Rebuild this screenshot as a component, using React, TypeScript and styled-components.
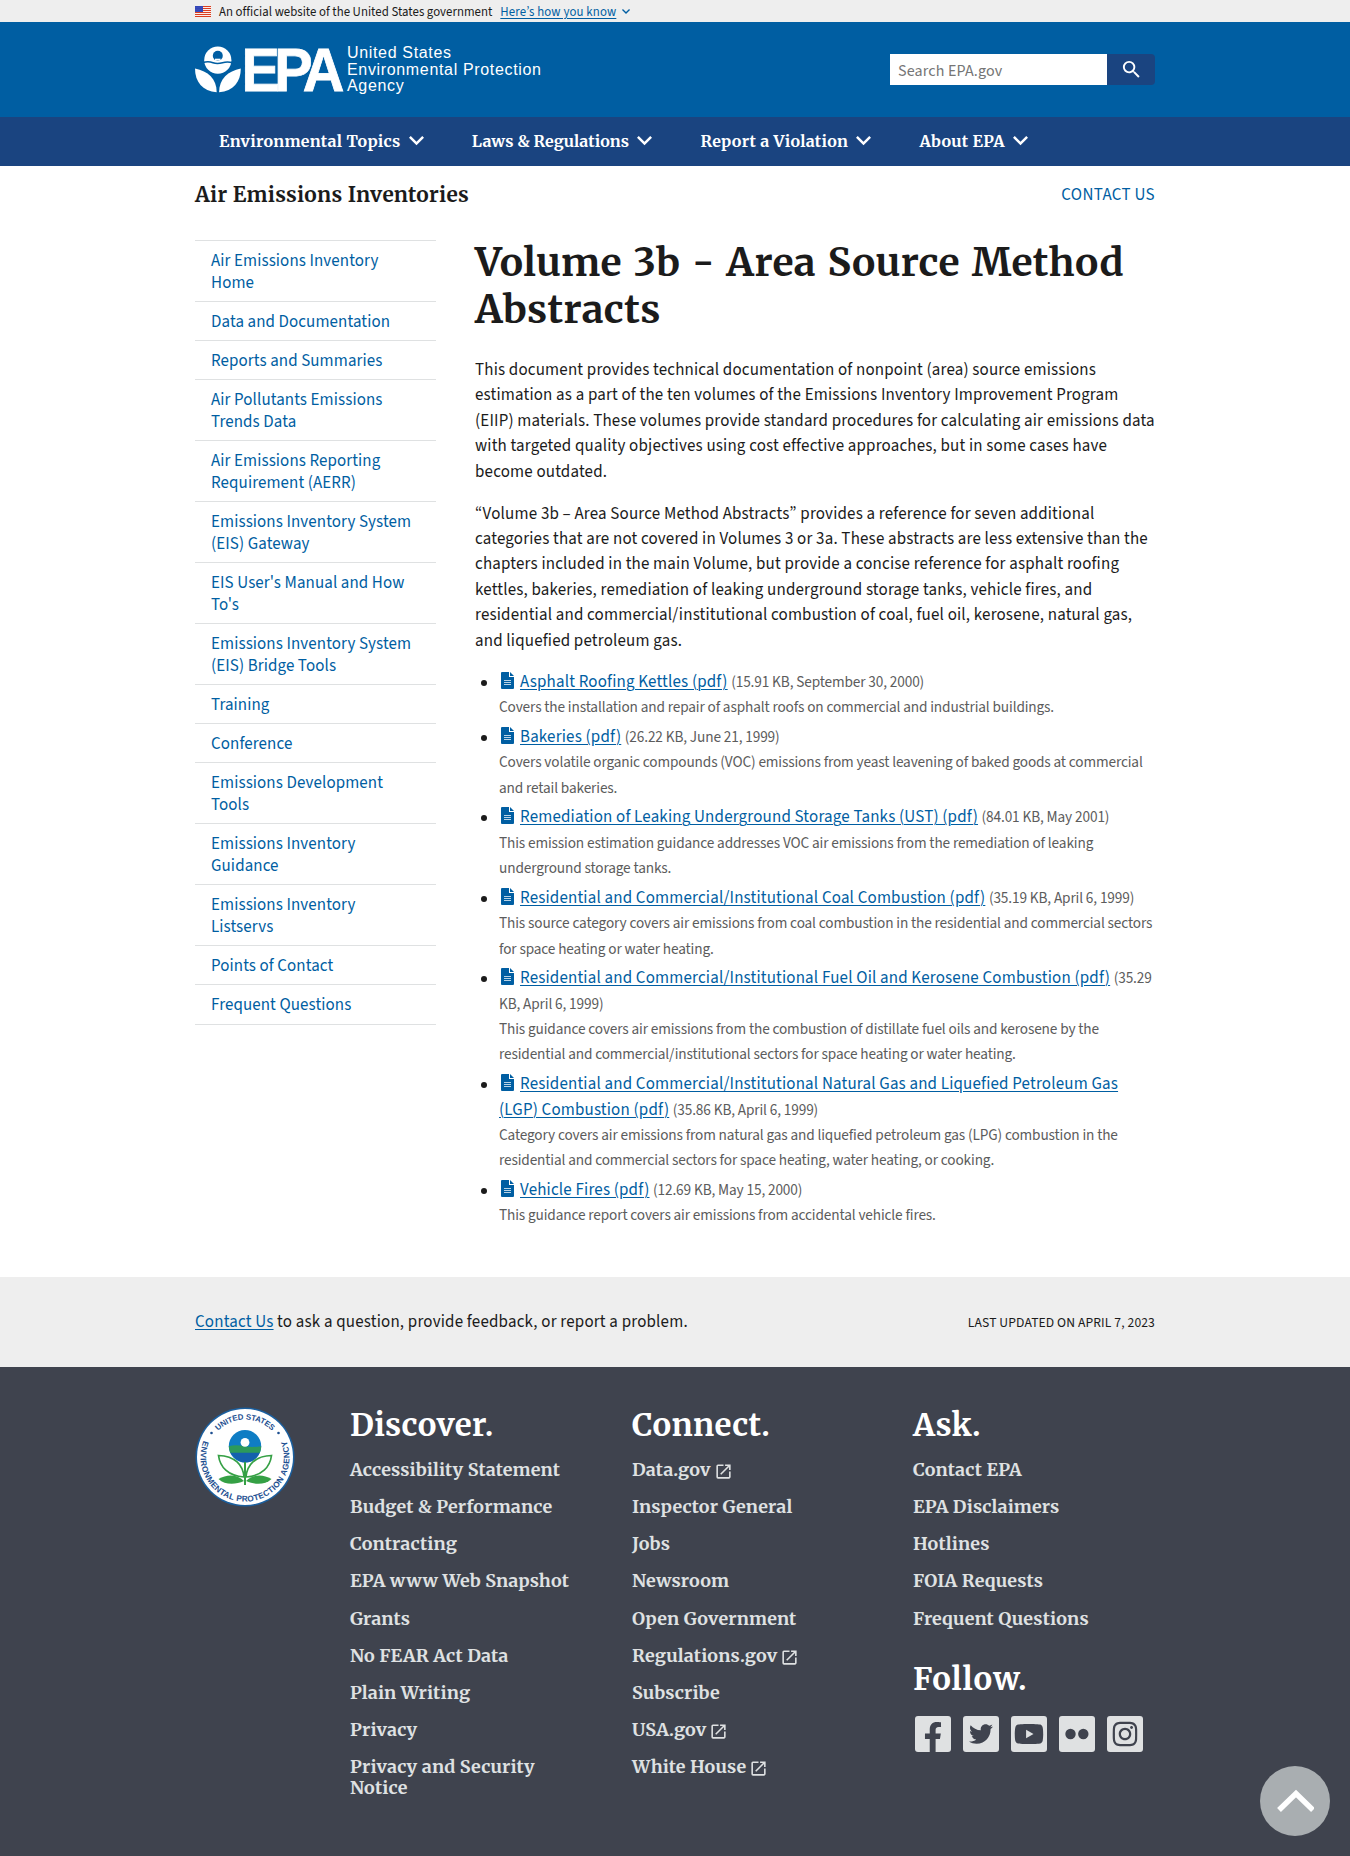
import React from "react";
import styled, { createGlobalStyle, css } from "styled-components";
import { FaFacebookF, FaInstagram, FaTwitter, FaYoutube } from "react-icons/fa";

const sans =
  '"Source Sans 3", "Source Sans Pro", "Noto Sans CJK KR", "Noto Sans", sans-serif';
const serif = 'Merriweather, "Noto Serif", "DejaVu Serif Condensed", "DejaVu Serif", serif';

const color = {
  ink: "#1b1b1b",
  muted: "#5c5c5c",
  link: "#005ea2",
  primary: "#005ea2",
  navy: "#1a4480",
  pale: "#eeeeee",
  line: "#dfe1e2",
  footer: "#3f434e",
};

const GlobalStyle = createGlobalStyle`
  * { box-sizing: border-box; }
  body {
    margin: 0;
    background: #fff;
    color: ${color.ink};
    font-family: ${sans};
    font-size: 16.96px;
    line-height: 25.44px;
  }
  h1, h2, h3, p, ul { margin: 0; padding: 0; }
`;

const Container = styled.div`
  width: 960px;
  margin: 0 auto;
`;

const linkStyle = css`
  color: ${color.link};
  text-decoration: underline;
  text-decoration-thickness: 1px;
  text-underline-offset: 2px;
`;

const TextLink = styled.a`
  ${linkStyle}
`;

/* Government banner */

const Banner = styled.div`
  height: 22px;
  background: ${color.pale};
  font-size: 12.8px;
  line-height: 22px;
`;

const BannerRow = styled(Container)`
  display: flex;
  align-items: center;
  height: 22px;
  padding-top: 1px;
  letter-spacing: 0.03px;

  > svg:first-child { margin-right: 8px; }
  > a { margin: 0 6px 0 8px; letter-spacing: 0.14px; }
`;

/* Header */

const Header = styled.header`
  height: 95px;
  background: ${color.primary};
`;

const HeaderRow = styled(Container)`
  display: flex;
  justify-content: space-between;
  align-items: flex-start;
`;

const Brand = styled.a`
  display: flex;
  margin-top: 24px;
  color: #fff;
`;

const BrandName = styled.span`
  margin: -1px 0 0 3px;
  font-family: "Liberation Sans", Arial, sans-serif;
  font-size: 16px;
  line-height: 16.6px;
  letter-spacing: 0.66px;
`;

const Search = styled.form`
  display: flex;
  height: 31px;
  margin-top: 32px;
`;

const SearchInput = styled.input`
  width: 217px;
  height: 31px;
  padding: 2px 8px 0;
  border: 0;
  background: #fff;
  font-family: ${sans};
  font-size: 16px;
  letter-spacing: 0.15px;
  &::placeholder { color: #757575; opacity: 1; }
`;

const SearchButton = styled.button`
  display: flex;
  align-items: center;
  justify-content: center;
  width: 48px;
  padding: 0;
  border: 0;
  border-radius: 0 4px 4px 0;
  background: ${color.navy};
`;

const Nav = styled.nav`
  height: 49px;
  background: ${color.navy};
`;

const NavRow = styled(Container)`
  display: flex;
  align-items: center;
  gap: 48.3px;
  height: 48px;
  padding-left: 24px;
`;

const NavItem = styled.a<{ $tracking: number }>`
  display: flex;
  align-items: center;
  gap: 8px;
  color: #fff;
  font-family: ${serif};
  font-size: 16px;
  font-weight: 700;
  line-height: 20px;
  letter-spacing: ${(p) => p.$tracking}px;
`;

/* Page body */

const SiteBar = styled(Container)`
  display: flex;
  justify-content: space-between;
  align-items: center;
  height: 57px;
  padding-top: 2px;
`;

const SiteName = styled.h2`
  font-family: ${serif};
  font-size: 20.8px;
  letter-spacing: 0.32px;
`;

const ContactLink = styled.a`
  color: ${color.link};
  letter-spacing: 0.32px;
`;

const Columns = styled(Container)`
  display: flex;
  align-items: flex-start;
  gap: 39px;
  height: 1054px;
  padding-top: 17px;
`;

const SideNav = styled.ul`
  flex: none;
  width: 241px;
  list-style: none;
  line-height: 22px;
  letter-spacing: 0.1px;
  border-bottom: 1px solid ${color.line};
`;

const SideItem = styled.li`
  padding: 9px 16px 7px;
  border-top: 1px solid ${color.line};
  color: ${color.link};

  &:last-child { padding-bottom: 8px; }
`;

const Main = styled.main`
  flex: none;
  width: 680px;
  letter-spacing: 0.18px;
`;

const PageTitle = styled.h1`
  margin: -1px 0 25px;
  font-family: ${serif};
  font-size: 39px;
  line-height: 47px;
  letter-spacing: 0.36px;
  word-spacing: 2px;
`;

const Paragraph = styled.p`
  margin-bottom: 16.4px;
  white-space: nowrap;
`;

const DocList = styled.ul`
  margin-top: -1px;
  list-style: none;
`;

const DocItem = styled.li`
  display: flex;
  margin-bottom: 4.2px;
  white-space: nowrap;

  &::before {
    content: "";
    width: 6px;
    height: 6px;
    margin: 10px 12px 0 6px;
    border-radius: 50%;
    background: ${color.ink};
  }
`;

const Small = styled.span`
  color: ${color.muted};
  font-size: 15.26px;
  letter-spacing: -0.13px;
`;

const Description = styled(Small)`
  display: block;
`;

const DocIconSvg = styled.svg`
  width: 13px;
  height: 17px;
  margin: -2px 6px 0 2px;
  vertical-align: -2px;
`;

/* Page footer */

const FeedbackBar = styled.div`
  height: 90px;
  background: ${color.pale};
`;

const FeedbackRow = styled(Container)`
  display: flex;
  justify-content: space-between;
  align-items: center;
  height: 90px;
  padding-top: 1px;
  letter-spacing: 0.19px;
`;

const Updated = styled.span`
  font-size: 13.6px;
  letter-spacing: 0.11px;
`;

const Footer = styled.footer`
  height: 489px;
  background: ${color.footer};
`;

const FooterRow = styled(Container)`
  display: grid;
  grid-template-columns: 155px 282px 281px 242px;
  padding-top: 38px;
`;

const FooterTitle = styled.h3<{ $after?: boolean }>`
  margin-top: ${(p) => (p.$after ? 30 : 0)}px;
  color: #fff;
  font-family: ${serif};
  font-size: 31.2px;
  line-height: 40px;
  letter-spacing: ${(p) => (p.$after ? 0.9 : 0.35)}px;
`;

const FooterLinks = styled.ul`
  display: flex;
  flex-direction: column;
  gap: 15.9px;
  width: 230px;
  margin-top: 14px;
  list-style: none;
`;

const FooterLink = styled.li`
  color: ${color.line};
  font-family: ${serif};
  font-size: 17.9px;
  font-weight: 700;
  line-height: 21.25px;
  letter-spacing: 0.16px;

  svg { margin: -4px 0 -4px 3px; vertical-align: -1px; }
`;

const Social = styled.div`
  display: flex;
  gap: 12px;
  margin: 17px 0 0 2px;
`;

const SocialTile = styled.a`
  display: flex;
  align-items: center;
  justify-content: center;
  width: 36px;
  height: 36px;
  border-radius: 3px;
  background: ${color.line};
  color: ${color.footer};
  overflow: hidden;
`;

const FacebookTile = styled(SocialTile)`
  align-items: flex-end;
`;

const BackToTop = styled.a`
  position: fixed;
  right: 20px;
  bottom: 20px;
  display: flex;
  align-items: center;
  justify-content: center;
  width: 70px;
  height: 70px;
  border-radius: 50%;
  background: #a9aeb1;
`;

/* Drawings */

const MarkSvg = styled.svg`
  overflow: visible;
`;

const Flag = () => (
  <svg width="16" height="11" viewBox="0 0 16 11">
    <rect width="16" height="11" fill="#fff" />
    {[0, 2, 4, 6, 8, 10].map((y) => (
      <rect key={y} y={y} width="16" height="1.1" fill="#db3e1f" />
    ))}
    <rect width="8" height="6" fill="#1e33b1" />
    {[1, 3, 5].map((y) =>
      [1, 3, 5, 7].map((x) => (
        <circle key={`${x}-${y}`} cx={x} cy={y} r="0.4" fill="#fff" />
      )),
    )}
  </svg>
);

const Chevron = ({ width, fill }: { width: number; fill: string }) => (
  <svg width={width} height={width * 0.62} viewBox="6 8.59 12 7.41">
    <path fill={fill} d="M16.59 8.59 12 13.17 7.41 8.59 6 10l6 6 6-6z" />
  </svg>
);

const SearchIcon = () => (
  <svg width="23" height="23" viewBox="0 0 24 24">
    <path
      fill="#fff"
      d="M15.5 14h-.79l-.28-.27A6.47 6.47 0 0 0 16 9.5 6.5 6.5 0 1 0 9.5 16c1.61 0 3.09-.59 4.23-1.57l.27.28v.79l5 4.99L20.49 19l-4.99-5zm-6 0C7.01 14 5 11.99 5 9.5S7.01 5 9.5 5 14 7.01 14 9.5 11.99 14 9.5 14z"
    />
  </svg>
);

const EpaMark = () => (
  <MarkSvg width="149" height="47" viewBox="0 0 149 47">
    <circle cx="22.8" cy="14.2" r="13.6" fill="#fff" />
    <circle cx="22.8" cy="9.8" r="5" fill={color.primary} />
    <path
      d="M8 16.6c4-1.400 7-1 10 .1s6 1 9.500 0 6-1 10-.1"
      fill="none"
      stroke={color.primary}
      strokeWidth="1.600"
    />
    <path d="M20 13.600h5.600" stroke="#fff" strokeWidth="1.800" />
    <path d="M0 22.500C13 25 21.700 33 21.700 46.300 7.500 45 0 36 0 22.500Z" fill="#fff" />
    <path d="M45.800 22.500C33 25 24.100 33 24.100 46.300 38.300 45 45.800 36 45.800 22.500Z" fill="#fff" />
    <text
      transform="translate(46.600 44.700) scale(0.93 1)"
      fill="#fff"
      stroke="#fff"
      strokeWidth="0.8"
      fontFamily='"Liberation Sans", Arial, sans-serif'
      fontWeight="700"
      fontSize="62"
      letterSpacing="-6.2"
    >
      EPA
    </text>
  </MarkSvg>
);

const DocIcon = () => (
  <DocIconSvg viewBox="0 0 13 17">
    <path fill={color.link} d="M1 0h7v5h5v11a1 1 0 0 1-1 1H1a1 1 0 0 1-1-1V1a1 1 0 0 1 1-1Z" />
    <path fill={color.link} d="M9 0l4 4H9Z" />
    <path stroke="#b9d3e6" strokeWidth="1" d="M3 8.500h7M3 10.500h7M3 12.500h7" />
  </DocIconSvg>
);

const ExternalIcon = () => (
  <svg width="19" height="19" viewBox="0 0 24 24">
    <path
      fill={color.line}
      d="M19 19H5V5h7V3H5a2 2 0 0 0-2 2v14a2 2 0 0 0 2 2h14c1.100 0 2-.9 2-2v-7h-2v7zM14 3v2h3.590l-9.830 9.830 1.410 1.410L19 6.410V10h2V3h-7z"
    />
  </svg>
);

const Seal = () => (
  <svg width="100" height="104" viewBox="-50 -52 100 104">
    <defs>
      <path id="seal-top" d="M-37.500 0A37.500 37.500 0 0 1 37.500 0" />
      <path id="seal-bottom" d="M-40.600-18.100A44.500 44.500 0 1 0 40.600-18.100" />
    </defs>
    <circle r="49.500" fill="#1b5f9e" />
    <circle r="48" fill="#fff" />
    <g fill="#1d4f91" fontFamily='"Liberation Sans", Arial, sans-serif' fontWeight="700">
      <text textAnchor="middle" fontSize="7.900">
        <textPath href="#seal-top" startOffset="50%" textLength="60">UNITED STATES</textPath>
      </text>
      <text fontSize="8.200">
        <textPath href="#seal-bottom" startOffset="2" textLength="173">ENVIRONMENTAL PROTECTION AGENCY</textPath>
      </text>
      <circle cx="-33.500" cy="-24" r="1.300" />
      <circle cx="33.500" cy="-24" r="1.300" />
    </g>
    <circle cy="-10.700" r="16.200" fill="#0f7dc4" />
    <path d="M-16.200-10.700c5-1.500 10-1 16 0s11 .8 16.400 0c0 2-.5 4.300-1.500 6.700H-14.700c-1-2.200-1.500-4.500-1.500-6.700Z" fill="#2c9a5b" />
    <path d="M-14.700-4.200h29.400C12 2 6.500 5.500 0 5.500S-12-.5-14.700-4.200Z" fill="#1461ad" />
    <circle cy="-14.600" r="4.400" fill="#fff" />
    <g fill="#fff" stroke="#35a045" strokeWidth="1.700">
      <path d="M-1 20C-2 8-10-1-26.500-1.500-25 10-17 19-1 20Z" />
      <path d="M1 20C2 8 10-1 26.500-1.500 25 10 17 19 1 20Z" />
    </g>
    <g fill="#35a045">
      <path d="M-1 24C-8 17-18 17-26.500 22-20 28-10 28-1 24Z" />
      <path d="M1 24C8 17 18 17 26.500 22 20 28 10 28 1 24Z" />
      <rect x="-1" y="5" width="2" height="23" />
    </g>
  </svg>
);

/* Content */

const navItems = [
  { label: "Environmental Topics", tracking: 0.3 },
  { label: "Laws & Regulations", tracking: 0.06 },
  { label: "Report a Violation", tracking: 0.3 },
  { label: "About EPA", tracking: 0.3 },
];

const sideItems = [
  "Air Emissions Inventory Home",
  "Data and Documentation",
  "Reports and Summaries",
  "Air Pollutants Emissions Trends Data",
  "Air Emissions Reporting Requirement (AERR)",
  "Emissions Inventory System (EIS) Gateway",
  "EIS User's Manual and How To's",
  "Emissions Inventory System (EIS) Bridge Tools",
  "Training",
  "Conference",
  "Emissions Development Tools",
  "Emissions Inventory Guidance",
  "Emissions Inventory Listservs",
  "Points of Contact",
  "Frequent Questions",
];

const paragraphs = [
  [
    "This document provides technical documentation of nonpoint (area) source emissions",
    "estimation as a part of the ten volumes of the Emissions Inventory Improvement Program",
    "(EIIP) materials. These volumes provide standard procedures for calculating air emissions data",
    "with targeted quality objectives using cost effective approaches, but in some cases have",
    "become outdated.",
  ],
  [
    "“Volume 3b – Area Source Method Abstracts” provides a reference for seven additional",
    "categories that are not covered in Volumes 3 or 3a. These abstracts are less extensive than the",
    "chapters included in the main Volume, but provide a concise reference for asphalt roofing",
    "kettles, bakeries, remediation of leaking underground storage tanks, vehicle fires, and",
    "residential and commercial/institutional combustion of coal, fuel oil, kerosene, natural gas,",
    "and liquefied petroleum gas.",
  ],
];

const documents = [
  {
    title: ["Asphalt Roofing Kettles (pdf)"],
    meta: ["(15.91 KB, September 30, 2000)"],
    text: ["Covers the installation and repair of asphalt roofs on commercial and industrial buildings."],
  },
  {
    title: ["Bakeries (pdf)"],
    meta: ["(26.22 KB, June 21, 1999)"],
    text: [
      "Covers volatile organic compounds (VOC) emissions from yeast leavening of baked goods at commercial",
      "and retail bakeries.",
    ],
  },
  {
    title: ["Remediation of Leaking Underground Storage Tanks (UST) (pdf)"],
    meta: ["(84.01 KB, May 2001)"],
    text: [
      "This emission estimation guidance addresses VOC air emissions from the remediation of leaking",
      "underground storage tanks.",
    ],
  },
  {
    title: ["Residential and Commercial/Institutional Coal Combustion (pdf)"],
    meta: ["(35.19 KB, April 6, 1999)"],
    text: [
      "This source category covers air emissions from coal combustion in the residential and commercial sectors",
      "for space heating or water heating.",
    ],
  },
  {
    title: ["Residential and Commercial/Institutional Fuel Oil and Kerosene Combustion (pdf)"],
    meta: ["(35.29", "KB, April 6, 1999)"],
    text: [
      "This guidance covers air emissions from the combustion of distillate fuel oils and kerosene by the",
      "residential and commercial/institutional sectors for space heating or water heating.",
    ],
  },
  {
    title: [
      "Residential and Commercial/Institutional Natural Gas and Liquefied Petroleum Gas",
      "(LGP) Combustion (pdf)",
    ],
    meta: ["(35.86 KB, April 6, 1999)"],
    text: [
      "Category covers air emissions from natural gas and liquefied petroleum gas (LPG) combustion in the",
      "residential and commercial sectors for space heating, water heating, or cooking.",
    ],
  },
  {
    title: ["Vehicle Fires (pdf)"],
    meta: ["(12.69 KB, May 15, 2000)"],
    text: ["This guidance report covers air emissions from accidental vehicle fires."],
  },
];

const discover = [
  "Accessibility Statement",
  "Budget & Performance",
  "Contracting",
  "EPA www Web Snapshot",
  "Grants",
  "No FEAR Act Data",
  "Plain Writing",
  "Privacy",
  "Privacy and Security Notice",
];

const connect = [
  "Data.gov",
  "Inspector General",
  "Jobs",
  "Newsroom",
  "Open Government",
  "Regulations.gov",
  "Subscribe",
  "USA.gov",
  "White House",
];

const external = ["Data.gov", "Regulations.gov", "USA.gov", "White House"];

const ask = ["Contact EPA", "EPA Disclaimers", "Hotlines", "FOIA Requests", "Frequent Questions"];

const Lines = ({ of }: { of: string[] }) => (
  <>
    {of.map((line, i) => (
      <React.Fragment key={line}>
        {i > 0 && <br />}
        {line}
      </React.Fragment>
    ))}
  </>
);

const LinkList = ({ items }: { items: string[] }) => (
  <FooterLinks>
    {items.map((item) => (
      <FooterLink key={item}>
        {item}
        {external.includes(item) && <ExternalIcon />}
      </FooterLink>
    ))}
  </FooterLinks>
);

export default function App() {
  return (
    <>
      <GlobalStyle />
      <Banner>
        <BannerRow>
          <Flag />
          An official website of the United States government
          <TextLink>Here’s how you know</TextLink>
          <Chevron width={8} fill={color.link} />
        </BannerRow>
      </Banner>
      <Header>
        <HeaderRow>
          <Brand>
            <EpaMark />
            <BrandName>
              <Lines of={["United States", "Environmental Protection", "Agency"]} />
            </BrandName>
          </Brand>
          <Search>
            <SearchInput placeholder="Search EPA.gov" />
            <SearchButton type="button">
              <SearchIcon />
            </SearchButton>
          </Search>
        </HeaderRow>
      </Header>
      <Nav>
        <NavRow>
          {navItems.map((item) => (
            <NavItem key={item.label} $tracking={item.tracking}>
              {item.label}
              <Chevron width={15} fill="#fff" />
            </NavItem>
          ))}
        </NavRow>
      </Nav>
      <SiteBar>
        <SiteName>Air Emissions Inventories</SiteName>
        <ContactLink>CONTACT US</ContactLink>
      </SiteBar>
      <Columns>
        <SideNav>
          {sideItems.map((item) => (
            <SideItem key={item}>{item}</SideItem>
          ))}
        </SideNav>
        <Main>
          <PageTitle>
            <Lines of={["Volume 3b - Area Source Method", "Abstracts"]} />
          </PageTitle>
          {paragraphs.map((lines) => (
            <Paragraph key={lines[0]}>
              <Lines of={lines} />
            </Paragraph>
          ))}
          <DocList>
            {documents.map((doc) => (
              <DocItem key={doc.title[0]}>
                <div>
                  <DocIcon />
                  <TextLink>
                    <Lines of={doc.title} />
                  </TextLink>{" "}
                  <Small>
                    <Lines of={doc.meta} />
                  </Small>
                  <Description>
                    <Lines of={doc.text} />
                  </Description>
                </div>
              </DocItem>
            ))}
          </DocList>
        </Main>
      </Columns>
      <FeedbackBar>
        <FeedbackRow>
          <span>
            <TextLink>Contact Us</TextLink> to ask a question, provide feedback, or report a problem.
          </span>
          <Updated>LAST UPDATED ON APRIL 7, 2023</Updated>
        </FeedbackRow>
      </FeedbackBar>
      <Footer>
        <FooterRow>
          <div>
            <Seal />
          </div>
          <div>
            <FooterTitle>Discover.</FooterTitle>
            <LinkList items={discover} />
          </div>
          <div>
            <FooterTitle>Connect.</FooterTitle>
            <LinkList items={connect} />
          </div>
          <div>
            <FooterTitle>Ask.</FooterTitle>
            <LinkList items={ask} />
            <FooterTitle $after>Follow.</FooterTitle>
            <Social>
              <FacebookTile>
                <FaFacebookF size={30} />
              </FacebookTile>
              <SocialTile>
                <FaTwitter size={24} />
              </SocialTile>
              <SocialTile>
                <FaYoutube size={30} />
              </SocialTile>
              <SocialTile>
                <svg width="24" height="12" viewBox="0 0 24 12" fill={color.footer}>
                  <circle cx="5.500" cy="6" r="5.200" />
                  <circle cx="18.300" cy="6" r="5.200" />
                </svg>
              </SocialTile>
              <SocialTile>
                <FaInstagram size={28} />
              </SocialTile>
            </Social>
          </div>
        </FooterRow>
      </Footer>
      <BackToTop>
        <svg width="38" height="24" viewBox="0 0 38 24">
          <path d="M3 21 20 4.500 37 21" fill="none" stroke="#fff" strokeWidth="5.500" />
        </svg>
      </BackToTop>
    </>
  );
}
